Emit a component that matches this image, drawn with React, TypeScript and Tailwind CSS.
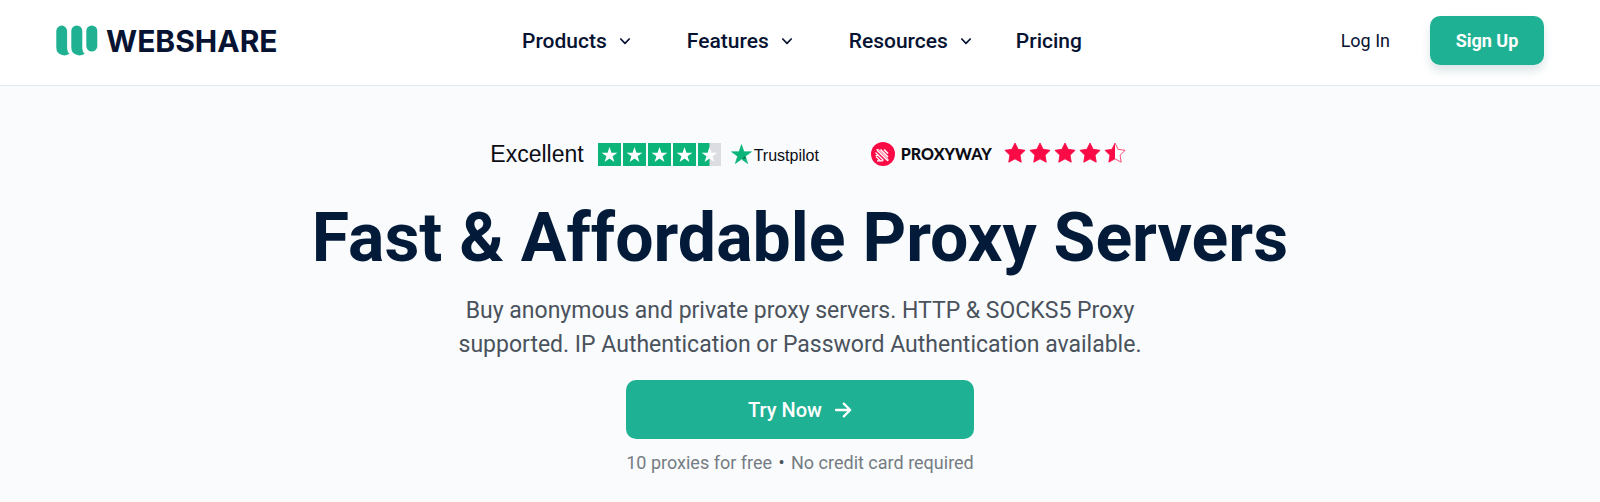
import React from 'react';

const STAR = 'M12 0.8l2.75 8.1h8.55l-6.9 5.1 2.6 8.3L12 17.2l-7 5.1 2.6-8.3L0.7 8.9h8.55z';
const FAT_STAR = 'M12 1.2l3.4 6.8 7.6 1.1-5.5 5.3 1.3 7.6L12 18.4l-6.8 3.6 1.3-7.6L1 9.1l7.6-1.1z';

const menus = ['Products', 'Features', 'Resources'];

function Logo() {
  return (
    <a href="#" className="flex items-center gap-2 text-[#071332]">
      <svg viewBox="0 0 42 31" className="w-[42px] h-[31px]" fill="#20b193" aria-hidden="true">
        <path d="M0.3 6a5.4 5.4 0 0 1 10.8 0v17.5q0.2 3.4 2.4 5.3q-2.4 1.6-5.4 1.6q-7.8-0.6-7.8-7.8z" />
        <path d="M15.3 6a5.5 5.5 0 0 1 11 0v17.5q0.2 3.4 2.4 5.3q-2.4 1.6-5.4 1.6q-8-0.6-8-7.8z" />
        <rect x="30.3" y="0.5" width="11" height="26" rx="5.5" />
      </svg>
      <span className="font-['Inter'] text-[30px] leading-8 font-bold">WEBSHARE</span>
    </a>
  );
}

function Chevron() {
  return (
    <svg viewBox="0 0 12 12" className="w-3 h-3" fill="none" stroke="currentColor" strokeWidth="1.7" strokeLinecap="round" strokeLinejoin="round" aria-hidden="true">
      <path d="M1.8 4l4.2 4.4L10.2 4" />
    </svg>
  );
}

function Trustpilot() {
  return (
    <a href="#" className="flex items-center text-[#0b0d14] font-['Liberation_Sans',sans-serif]">
      <span className="text-[23px] leading-7">Excellent</span>
      <div className="flex gap-0.5 ml-3.5" role="img" aria-label="4.5 out of 5 stars">
        {[0, 1, 2, 3, 4].map((i) => (
          <svg key={i} viewBox="0 0 23 23" className="w-[23px] h-[23px]">
            <rect width="23" height="23" fill={i === 4 ? '#dcdce3' : '#0bb57a'} />
            {i === 4 && <rect width="11.5" height="23" fill="#0bb57a" />}
            <path d={STAR} fill="#fff" transform="translate(3.1 3.4) scale(0.7)" />
          </svg>
        ))}
      </div>
      <svg viewBox="0 0 24 24" className="w-[21px] h-[21px] ml-2.5" aria-hidden="true">
        <path d={STAR} fill="#0bb57a" stroke="#0bb57a" strokeWidth="0.8" />
        <path d="M12.6 17.2l4.2-1.2-0.6-2z" fill="#0c5540" />
      </svg>
      <span className="text-[16px] leading-5 mt-1 ml-0.5">Trustpilot</span>
    </a>
  );
}

function Proxyway() {
  return (
    <a href="#" className="flex items-center text-[#0b0d14]">
      <svg viewBox="0 0 24 24" className="w-6 h-6" aria-hidden="true">
        <circle cx="12" cy="12" r="12" fill="#fb0b46" />
        <g stroke="#fff" strokeWidth="1.6" fill="none">
          <path d="M5.5 7.5h2.2L17 16.8v2.2" strokeWidth="0.9" />
          <path d="M6 8L16.8 18.8" />
          <path d="M9.5 7.5L17 15" />
          <path d="M13 7.5L17 11.5" />
          <path d="M4.5 10.5L12.5 18.5" strokeWidth="1.3" />
          <path d="M5 14.5L9.5 19" strokeWidth="1.3" />
          <path d="M4.5 13.5h3.5M6 18.8h6" strokeWidth="1.2" />
        </g>
      </svg>
      <span className="font-['Lato',sans-serif] text-[16px] leading-6 font-black ml-1.5">PROXYWAY</span>
      <div className="flex gap-[3px] ml-3 -mt-0.5" role="img" aria-label="4.5 out of 5 stars">
        {[0, 1, 2, 3].map((i) => (
          <svg key={i} viewBox="0 0 24 24" className="w-[22px] h-[22px]">
            <path d={FAT_STAR} fill="#fb0b46" stroke="#fb0b46" strokeLinejoin="round" />
          </svg>
        ))}
        <svg viewBox="0 0 24 24" className="w-[22px] h-[22px]">
          <path d={FAT_STAR} fill="#fff" stroke="#fb0b46" strokeWidth="0.8" strokeLinejoin="round" />
          <path d="M12 1.2v17.2l-6.8 3.6 1.3-7.6L1 9.1l7.6-1.1z" fill="#fb0b46" />
        </svg>
      </div>
    </a>
  );
}

export default function App() {
  return (
    <div className="min-h-screen bg-[#f9fbfd] font-['Roboto',sans-serif] text-[#071332]">
      <header className="grid grid-cols-[1fr_auto_1fr] items-start bg-white border-b border-[#e3e9ec] px-14 pt-4 pb-5">
        <div className="flex items-center h-[49px]">
          <Logo />
        </div>
        <nav className="flex items-center gap-11 h-[49px] pl-1 text-[21px] leading-7 font-medium">
          {menus.map((name, i) => (
            <button key={name} className={`flex items-center gap-3 cursor-pointer ${i < 2 ? 'mr-3' : ''}`}>
              {name}
              <Chevron />
            </button>
          ))}
          <a href="#">Pricing</a>
        </nav>
        <div className="flex items-center justify-end gap-10">
          <a href="#" className="text-[18px] leading-6">Log In</a>
          <button className="w-[114px] h-[49px] rounded-[10px] bg-[#1fb193] text-white text-[18px] leading-6 font-bold shadow-[0_6px_10px_rgba(32,100,110,0.16)] cursor-pointer">
            Sign Up
          </button>
        </div>
      </header>

      <main className="flex flex-col items-center pt-[54px] px-6">
        <div className="flex items-center gap-[52px] pl-4">
          <Trustpilot />
          <Proxyway />
        </div>

        <h1 className="mt-7 text-[68px] leading-[84px] font-bold text-center text-[#031b38]">
          Fast &amp; Affordable Proxy Servers
        </h1>

        <p className="mt-3.5 max-w-[720px] text-[23px] leading-[34px] text-center text-[#4a525c]">
          Buy anonymous and private proxy servers. HTTP &amp; SOCKS5 Proxy supported. IP Authentication or Password Authentication available.
        </p>

        <button className="mt-[18px] w-[348px] h-[59px] flex items-center justify-center gap-3 rounded-[10px] bg-[#1fb193] text-white text-[20px] leading-7 font-medium cursor-pointer">
          Try Now
          <svg viewBox="0 0 18 18" className="w-[18px] h-[18px]" fill="none" stroke="currentColor" strokeWidth="2.3" strokeLinecap="round" strokeLinejoin="round" aria-hidden="true">
            <path d="M2 9h13.5M9.8 2.6L16.2 9l-6.4 6.4" />
          </svg>
        </button>

        <p className="mt-3 text-[18px] leading-6 text-[#757b82]">
          10 proxies for free <span className="mx-0.5 text-[#4a525c]">•</span> No credit card required
        </p>
      </main>
    </div>
  );
}
